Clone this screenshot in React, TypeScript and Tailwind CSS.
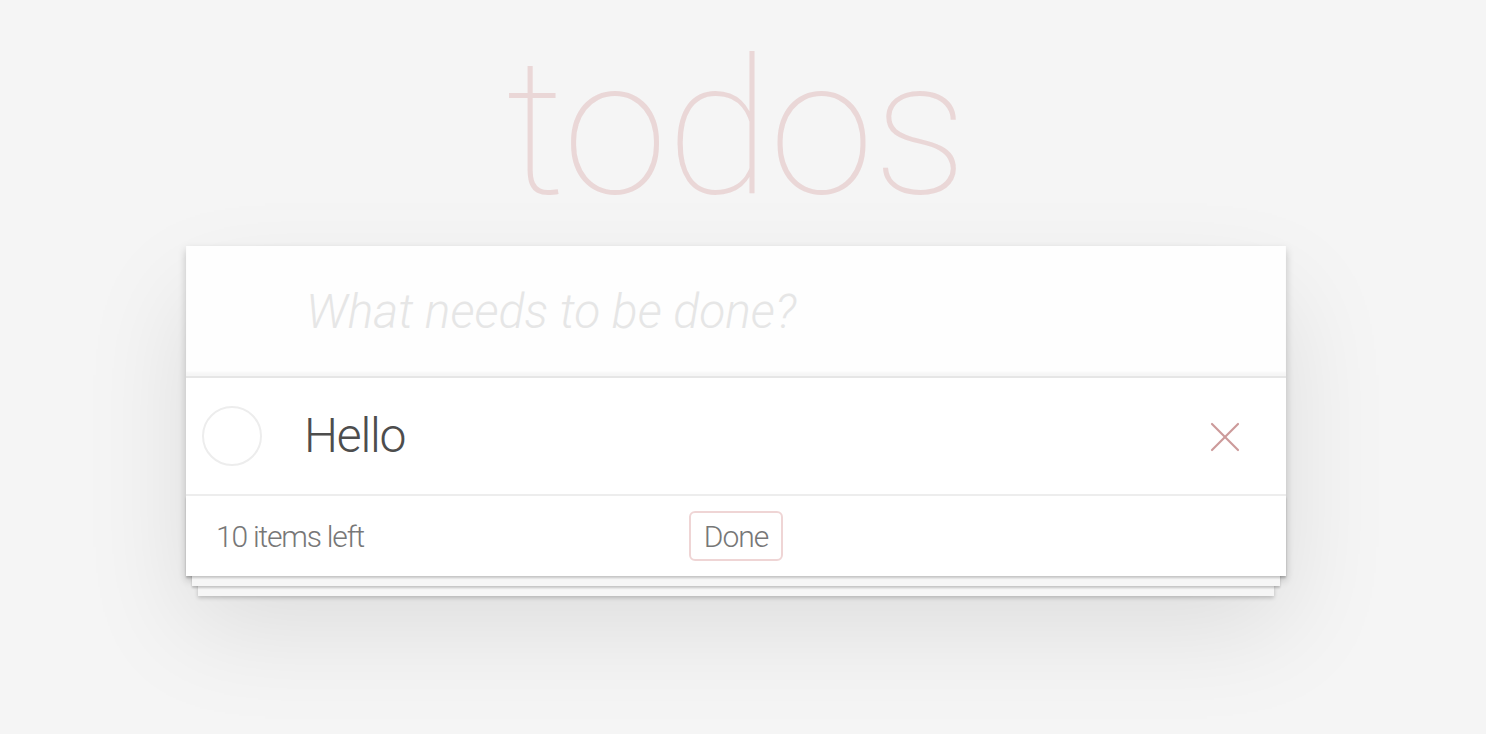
import { X } from 'lucide-react'

const FONT = "font-['Helvetica_Neue',Roboto,'Liberation_Sans',sans-serif]"

export default function App() {
  return (
    <div className={`min-h-screen bg-[#f5f5f5] ${FONT} font-light text-[#4d4d4d] overflow-hidden`}>
      <div className="ml-[186px] w-[1100px] pt-[10px] pb-[80px]">
        {/* Title */}
        <h1 className="text-center text-[190px] leading-[236px] font-thin text-[rgba(175,47,47,0.15)] tracking-[-1px]">
          todos
        </h1>

        {/* Card */}
        <section className="bg-white shadow-[0_4px_8px_0_rgba(0,0,0,0.2),0_50px_100px_0_rgba(0,0,0,0.1)]">
          <header className="h-[130px] bg-[rgba(0,0,0,0.003)] shadow-[inset_0_-4px_2px_rgba(0,0,0,0.03)]">
            <input
              className="w-full h-full pl-[120px] pr-8 text-[48px] bg-transparent outline-none placeholder:italic placeholder:text-[#e6e6e6] placeholder:font-light"
              placeholder="What needs to be done?"
            />
          </header>

          <ul className="border-t-2 border-[#e6e6e6]">
            <li className="flex items-center border-b-2 border-[#ededed]">
              <div className="ml-4 w-[60px] h-[60px] rounded-full border-2 border-[#ededed] shrink-0" />
              <label className="pl-[42px] py-[30px] text-[48px] leading-[56px] tracking-[-1.2px] flex-1">Hello</label>
              <button className="mr-[35px] mt-[2px] w-[52px] h-[52px] flex items-center justify-center text-[#cc9a9a]">
                <X size={52} strokeWidth={1} />
              </button>
            </li>
          </ul>

          <footer className="h-[80px] px-[30px] grid grid-cols-[1fr_auto_1fr] items-center text-[30px] tracking-[-1.2px] text-[#777] shadow-[0_2px_2px_rgba(0,0,0,0.2),0_16px_0_-6px_#f6f6f6,0_18px_2px_-6px_rgba(0,0,0,0.2),0_32px_0_-12px_#f6f6f6,0_34px_4px_-12px_rgba(0,0,0,0.2)]">
            <span>10 items left</span>
            <button className="w-[94px] h-[50px] rounded-[6px] border-2 border-[rgba(175,47,47,0.2)] text-[30px] tracking-[-1px] text-[#777]">
              Done
            </button>
            <span />
          </footer>
        </section>
      </div>
    </div>
  )
}
